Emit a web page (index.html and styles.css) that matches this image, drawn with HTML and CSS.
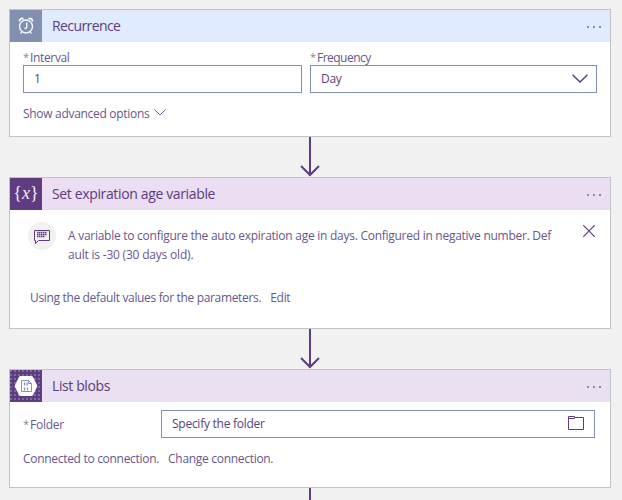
FILE: index.html
```html
<!DOCTYPE html>
<html lang="en">
<head>
<meta charset="utf-8">
<title>Workflow designer</title>
<link rel="stylesheet" href="styles.css">
</head>
<body>
<main class="flow">
  <section class="card recurrence">
    <header class="head">
      <span class="tile"><svg width="32" height="32" viewBox="0 0 32 32" fill="none" stroke="#f4f7ff" stroke-width="1.4"><circle cx="16" cy="16.500" r="6.500"/><path d="M16.700 12.500v4.500q0 1.500-2.200 1.500M12 22l-1.500 1.500M20 22l1.500 1.500"/><path d="M9.800 11.500c-1-1.800 1.600-3.900 3.700-2.500M22.200 11.500c1-1.800-1.600-3.900-3.700-2.500" stroke-width="1.800"/></svg></span>
      <h2 class="title t-rec">Recurrence</h2>
      <span class="dots"><i></i><i></i><i></i></span>
    </header>
    <div class="fields">
      <label class="field interval"><span class="label"><b>*</b><span class="l-int">Interval</span></span><span class="input">1</span></label>
      <label class="field frequency"><span class="label"><b>*</b><span class="l-freq">Frequency</span></span><span class="input"><span class="v-day">Day</span><svg class="chevron" width="16" height="9" viewBox="0 0 16 9" fill="none" stroke="#5b3c85" stroke-width="1.5"><path d="M.6.8 8 8 15.4.8"/></svg></span></label>
    </div>
    <a class="advanced"><span class="t-adv">Show advanced options</span><svg width="12" height="7" viewBox="0 0 12 7" fill="none" stroke="#6d6797"><path d="M.4.5 6 6 11.6.5"/></svg></a>
  </section>

  <svg class="arrow" width="22" height="40" viewBox="0 0 22 40" fill="none" stroke="#5f3b82" stroke-width="2"><path d="M11 0v38M2 29l9 9 9-9"/></svg>

  <section class="card variable">
    <header class="head">
      <span class="tile"><span class="brace">{<em>x</em>}</span></span>
      <h2 class="title t-set">Set expiration age variable</h2>
      <span class="dots"><i></i><i></i><i></i></span>
    </header>
    <div class="note">
      <span class="bubble"><svg width="28" height="28" viewBox="0 0 28 28" fill="none" stroke="#5f3b82"><path d="M6.500 8.500h15v10h-11l-3 3v-3h-1z"/><path d="M9 10.500h10M9 12.500h10M9 14.500h8" stroke-width="1.300" stroke-dasharray="1.500 .5"/></svg></span>
      <p class="desc"><span class="d-one">A variable to configure the auto expiration age in days. Configured in negative number. Def</span><br><span class="d-two">ault is -30 (30 days old).</span></p>
      <svg class="close" width="12" height="12" viewBox="0 0 12 12" fill="none" stroke="#5b3c85" stroke-width="1.200"><path d="M.3.3l11.400 11.400M11.700.3.3 11.700"/></svg>
    </div>
    <p class="defaults"><span class="t-using">Using the default values for the parameters.</span><a class="t-edit">Edit</a></p>
  </section>

  <svg class="arrow" width="22" height="40" viewBox="0 0 22 40" fill="none" stroke="#5f3b82" stroke-width="2"><path d="M11 0v38M2 29l9 9 9-9"/></svg>

  <section class="card blobs">
    <header class="head">
      <span class="tile"><svg width="32" height="32" viewBox="0 0 32 32" fill="none"><path d="M10.500 6h11q1 0 1.500 1l4 8q.5 1 0 2l-4 8q-.5 1-1.500 1h-11q-1 0-1.500-1l-4-8q-.5-1 0-2l4-8q.5-1 1.500-1z" fill="#fff"/><path d="M11.500 10.500h7l3 3v8h-10zM18.500 10.500v3h3" stroke="#8792b4"/><path d="M14.500 12.500v3M17 12.500v3M14.500 17.500v3M17.500 17.500v3" stroke="#8792b4" stroke-width="1.300"/></svg></span>
      <h2 class="title t-list">List blobs</h2>
      <span class="dots"><i></i><i></i><i></i></span>
    </header>
    <div class="row">
      <span class="label"><b>*</b><span class="l-fold">Folder</span></span>
      <span class="input"><span class="v-spec">Specify the folder</span><svg class="folder" width="16" height="14" viewBox="0 0 16 14" fill="none" stroke="#5f3b82"><path d="M.5.5h6v1h9v12H.5zM.5 2.500h6v-1"/></svg></span>
    </div>
    <p class="connection"><span class="t-conn">Connected to connection.</span><a class="t-chg">Change connection.</a></p>
  </section>

  <span class="stem"></span>
</main>
</body>
</html>
```

FILE: styles.css
```css
* { box-sizing: border-box; }
body {
  margin: 0;
  height: 500px;
  overflow: hidden;
  background: #f1f1f1;
  color: #67578d;
  font: 12px/16px "Open Sans", "Noto Sans", sans-serif;
  letter-spacing: -.3px;
}
p, h2 { margin: 0; }
svg { display: block; flex: none; }
span, a { white-space: nowrap; }
.flow { display: flex; flex-direction: column; align-items: center; width: 602px; margin: 9px 0 0 9px; }
.card { width: 602px; background: #fff; border: 1px solid #c3c3c3; }
.recurrence { height: 128px; }
.variable { height: 152px; }
.blobs { height: 119px; }
.head { display: flex; align-items: center; height: 32px; padding-right: 9px; }
.recurrence .head { background: #e0ebff; }
.variable .head { background: #ebddf2; }
.blobs .head { background: repeating-conic-gradient(#eddcf4 0 25%, #e6e5ed 0 50%) 0 0 / 4px 4px; }
.tile { display: flex; align-items: center; justify-content: center; width: 32px; height: 32px; flex: none; background: #5f3b82; }
.recurrence .tile { background: #8190b0; }
.blobs .tile { background: radial-gradient(circle at 1px 1px, #7772a1 .7px, #5f3b82 .8px) 0 0 / 4px 4px; }
.brace { color: #f3eef8; font: 18px/28px "Liberation Serif", serif; letter-spacing: 0; padding-bottom: 3px; }
.title { margin-left: 10px; font-size: 14px; line-height: 20px; font-weight: 400; color: #5b3c80; white-space: nowrap; }
.t-rec { letter-spacing: -.6px; }
.t-set { letter-spacing: -.36px; }
.t-list { letter-spacing: -.4px; }
.dots { display: flex; gap: 4px; margin: 2px 0 0 auto; }
.dots i { width: 2px; height: 2px; background: #8190b0; }
.fields { display: flex; gap: 8px; padding: 8px 13px 0; }
.interval { width: 279px; }
.frequency { width: 287px; }
.field { display: block; }
.label { display: flex; height: 15px; line-height: 16px; }
.label b { width: 7px; font-weight: 400; font-size: 11px; line-height: 14px; color: #888; }
.l-int { letter-spacing: -.35px; }
.l-freq { letter-spacing: -.52px; }
.l-fold { letter-spacing: -.25px; }
.v-spec { letter-spacing: -.26px; }
.input { display: flex; align-items: center; justify-content: space-between; height: 28px; padding: 0 8px 1px 10px; border: 1px solid #8190b0; background: #fff; color: #5b4080; }
.advanced { display: flex; gap: 5px; padding: 13px 13px 0; }
.advanced svg { margin-top: 3px; }
.arrow { height: 40px; }
.note { display: flex; padding: 12px 15px 0 18px; }
.bubble { width: 28px; height: 28px; border-radius: 50%; background: #f1f1f1; }
.desc { width: 490px; margin: 4px 0 0 12px; line-height: 19px; }
.d-one { letter-spacing: -.265px; }
.d-two { letter-spacing: -.2px; }
.close { margin: 3px 0 0 auto; }
.defaults { display: flex; gap: 9px; padding: 26px 0 0 20px; }
.t-using { letter-spacing: -.34px; }
.row { display: flex; padding: 8px 15px 0 13px; }
.row .label { width: 138px; padding-top: 7px; height: 28px; }
.row .input { flex: 1; padding-right: 10px; }
.folder { margin-top: -1px; }
.connection { display: flex; gap: 9px; padding: 13px; }
.stem { width: 2px; height: 12px; background: #5f3b82; }
```
